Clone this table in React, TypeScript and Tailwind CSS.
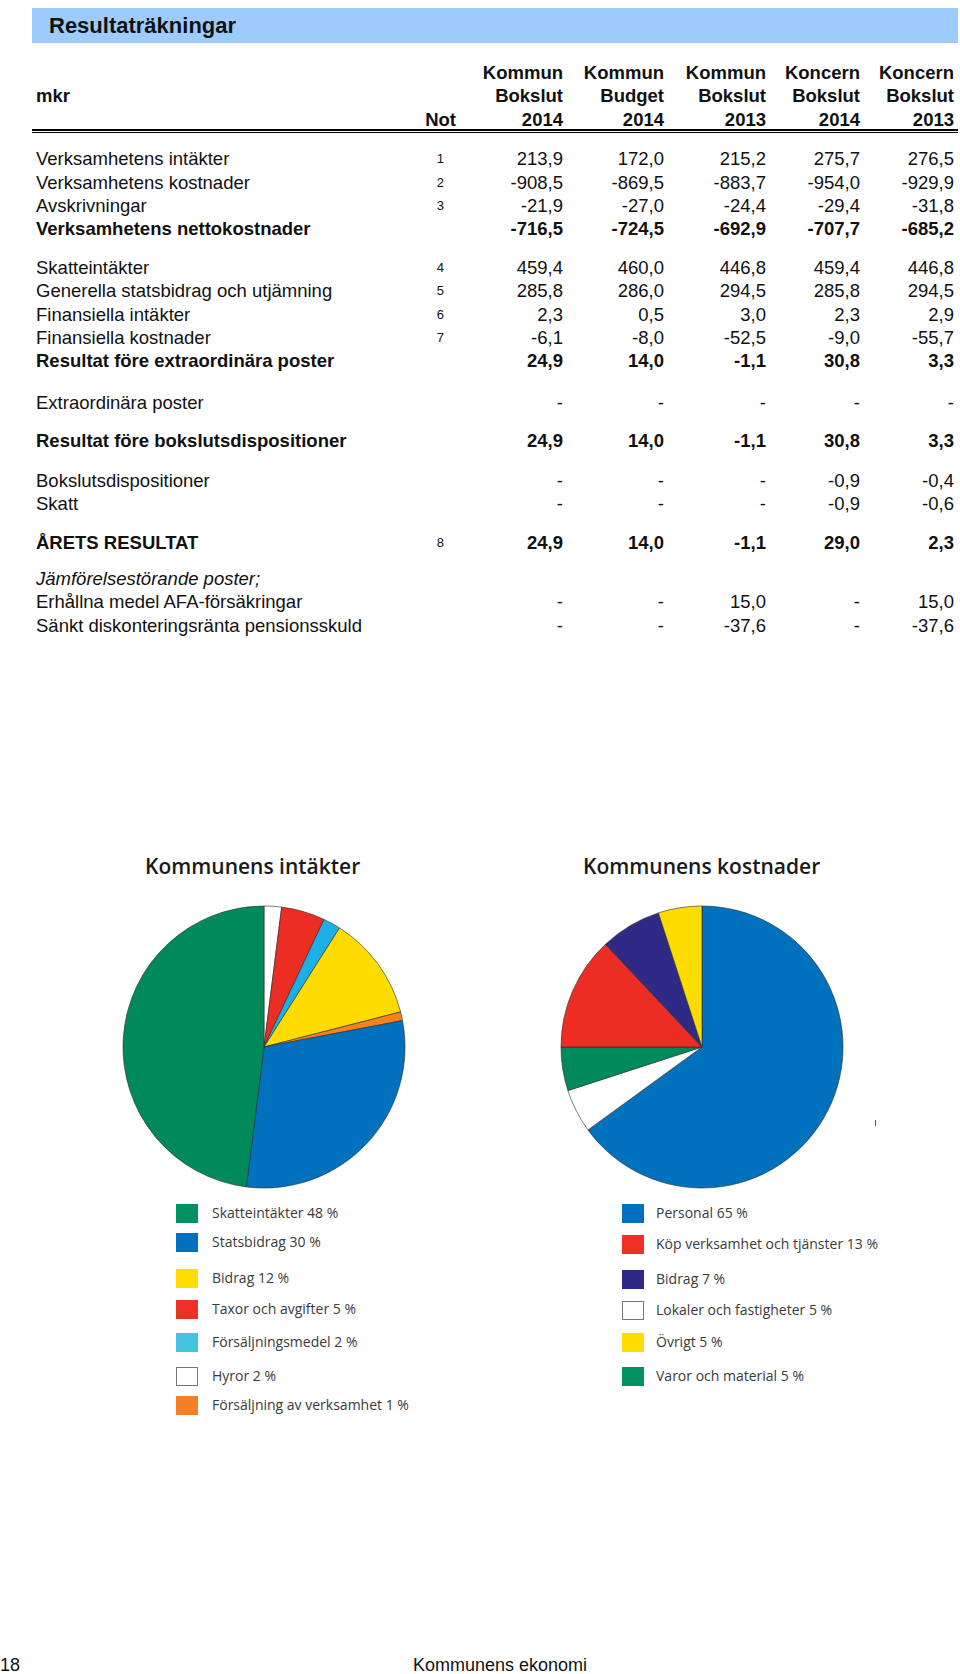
import React from "react"

type Row = {
  label: string
  not?: string
  vals: string[]
  bold?: boolean
  italic?: boolean
  gap?: string
}

const rows: Row[] = [
  { label: "Verksamhetens intäkter", not: "1", vals: ["213,9", "172,0", "215,2", "275,7", "276,5"] },
  { label: "Verksamhetens kostnader", not: "2", vals: ["-908,5", "-869,5", "-883,7", "-954,0", "-929,9"] },
  { label: "Avskrivningar", not: "3", vals: ["-21,9", "-27,0", "-24,4", "-29,4", "-31,8"] },
  { label: "Verksamhetens nettokostnader", vals: ["-716,5", "-724,5", "-692,9", "-707,7", "-685,2"], bold: true },
  { label: "Skatteintäkter", not: "4", vals: ["459,4", "460,0", "446,8", "459,4", "446,8"], gap: "mt-[15px]" },
  { label: "Generella statsbidrag och utjämning", not: "5", vals: ["285,8", "286,0", "294,5", "285,8", "294,5"] },
  { label: "Finansiella intäkter", not: "6", vals: ["2,3", "0,5", "3,0", "2,3", "2,9"] },
  { label: "Finansiella kostnader", not: "7", vals: ["-6,1", "-8,0", "-52,5", "-9,0", "-55,7"] },
  { label: "Resultat före extraordinära poster", vals: ["24,9", "14,0", "-1,1", "30,8", "3,3"], bold: true },
  { label: "Extraordinära poster", vals: ["-", "-", "-", "-", "-"], gap: "mt-[18px]" },
  { label: "Resultat före bokslutsdispositioner", vals: ["24,9", "14,0", "-1,1", "30,8", "3,3"], bold: true, gap: "mt-[15px]" },
  { label: "Bokslutsdispositioner", vals: ["-", "-", "-", "-0,9", "-0,4"], gap: "mt-[16px]" },
  { label: "Skatt", vals: ["-", "-", "-", "-0,9", "-0,6"] },
  { label: "ÅRETS RESULTAT", not: "8", vals: ["24,9", "14,0", "-1,1", "29,0", "2,3"], bold: true, gap: "mt-[15px]" },
  { label: "Jämförelsestörande poster;", vals: ["", "", "", "", ""], italic: true, gap: "mt-[13px]" },
  { label: "Erhållna medel AFA-försäkringar", vals: ["-", "-", "15,0", "-", "15,0"] },
  { label: "Sänkt diskonteringsränta pensionsskuld", vals: ["-", "-", "-37,6", "-", "-37,6"] },
]

const heads = [
  ["Kommun", "Bokslut", "2014"],
  ["Kommun", "Budget", "2014"],
  ["Kommun", "Bokslut", "2013"],
  ["Koncern", "Bokslut", "2014"],
  ["Koncern", "Bokslut", "2013"],
]

const grid = "grid grid-cols-[384px_36px_107px_101px_102px_94px_94px] pl-[4px]"

type Slice = { pct: number; color: string }

const income: Slice[] = [
  { pct: 2, color: "#ffffff" },
  { pct: 5, color: "#ec2d24" },
  { pct: 2, color: "#1db0e6" },
  { pct: 12, color: "#ffdc00" },
  { pct: 1, color: "#f5821f" },
  { pct: 30, color: "#0071bd" },
  { pct: 48, color: "#00895a" },
]

const costs: Slice[] = [
  { pct: 65, color: "#0071bd" },
  { pct: 5, color: "#ffffff" },
  { pct: 5, color: "#00895a" },
  { pct: 13, color: "#ec2d24" },
  { pct: 7, color: "#2e2a86" },
  { pct: 5, color: "#ffdc00" },
]

function arc(cx: number, cy: number, r: number, a0: number, a1: number) {
  const rad = (a: number) => ((a - 90) * Math.PI) / 180
  const x0 = cx + r * Math.cos(rad(a0))
  const y0 = cy + r * Math.sin(rad(a0))
  const x1 = cx + r * Math.cos(rad(a1))
  const y1 = cy + r * Math.sin(rad(a1))
  const large = a1 - a0 > 180 ? 1 : 0
  return `M${cx},${cy} L${x0},${y0} A${r},${r} 0 ${large} 1 ${x1},${y1} Z`
}

function Pie({ slices }: { slices: Slice[] }) {
  let a = 0
  return (
    <svg width="284" height="284" viewBox="0 0 284 284">
      {slices.map((s, i) => {
        const a0 = a
        a += s.pct * 3.6
        return (
          <path
            key={i}
            d={arc(142, 142, 141, a0, a)}
            fill={s.color}
            stroke="#2a2a2a"
            strokeWidth="0.6"
            strokeLinejoin="round"
          />
        )
      })}
    </svg>
  )
}

type Legend = { label: string; color: string; gap: string }

const incomeLegend: Legend[] = [
  { label: "Skatteintäkter 48 %", color: "bg-[#00925f]", gap: "mt-0" },
  { label: "Statsbidrag 30 %", color: "bg-[#0070c0]", gap: "mt-[9px]" },
  { label: "Bidrag 12 %", color: "bg-[#ffdd00]", gap: "mt-[16px]" },
  { label: "Taxor och avgifter 5 %", color: "bg-[#ee3124]", gap: "mt-[11px]" },
  { label: "Försäljningsmedel 2 %", color: "bg-[#45c3df]", gap: "mt-[13px]" },
  { label: "Hyror 2 %", color: "bg-white border border-[#777]", gap: "mt-[14px]" },
  { label: "Försäljning av verksamhet 1 %", color: "bg-[#f58025]", gap: "mt-[9px]" },
]

const costLegend: Legend[] = [
  { label: "Personal 65 %", color: "bg-[#0070c0]", gap: "mt-0" },
  { label: "Köp verksamhet och tjänster 13 %", color: "bg-[#ee3124]", gap: "mt-[11px]" },
  { label: "Bidrag 7 %", color: "bg-[#2e2a85]", gap: "mt-[15px]" },
  { label: "Lokaler och fastigheter 5 %", color: "bg-white border border-[#777]", gap: "mt-[11px]" },
  { label: "Övrigt 5 %", color: "bg-[#ffdd00]", gap: "mt-[12px]" },
  { label: "Varor och material 5 %", color: "bg-[#00925f]", gap: "mt-[14px]" },
]

function LegendList({ items, gapX }: { items: Legend[]; gapX: string }) {
  return (
    <div className="flex flex-col">
      {items.map((it) => (
        <div key={it.label} className={`flex items-center h-[20px] ${it.gap} ${gapX}`}>
          <span className={`w-[22px] h-[19px] shrink-0 ${it.color}`} />
          <span className="text-[14px] leading-[20px] text-[#3a3a3a] whitespace-nowrap">{it.label}</span>
        </div>
      ))}
    </div>
  )
}

export default function App() {
  return (
    <div className="h-[1674px] w-[960px] bg-white flex flex-col font-['Liberation_Sans',Arial,sans-serif] text-[#111]">
      {/* Title bar */}
      <div className="mt-[8px] ml-[32px] w-[926px] h-[35px] bg-[#9dcbfb] flex items-center pl-[17px]">
        <h1 className="text-[22px] font-bold leading-none text-[#111]">Resultaträkningar</h1>
      </div>

      {/* Table */}
      <div className="ml-[32px] w-[926px] mt-[18px] text-[18.5px] leading-[23.4px]">
        <div className={`${grid} font-bold`}>
          <div className="flex flex-col">
            <span>&nbsp;</span>
            <span>mkr</span>
          </div>
          <div className="flex flex-col text-right">
            <span>&nbsp;</span>
            <span>&nbsp;</span>
            <span>Not</span>
          </div>
          {heads.map((h, i) => (
            <div key={i} className="flex flex-col text-right">
              {h.map((t) => (
                <span key={t}>{t}</span>
              ))}
            </div>
          ))}
        </div>
        <div className="border-t-2 border-black -mt-[2px]" />
        <div className="border-t border-black mt-[1px]" />

        <div className="mt-[14px]">
          {rows.map((r) => (
            <div
              key={r.label}
              className={`${grid} ${r.gap ?? ""} ${r.bold ? "font-bold" : ""}`}
            >
              <span className={`whitespace-nowrap ${r.italic ? "italic" : ""}`}>{r.label}</span>
              <span className="text-[13px] text-right pr-[12px] font-normal">{r.not ?? ""}</span>
              {r.vals.map((v, i) => (
                <span key={i} className="text-right">
                  {v}
                </span>
              ))}
            </div>
          ))}
        </div>
      </div>

      {/* Charts */}
      <div className="relative mt-[215px] flex font-['Open_Sans',sans-serif]">
        <div className="ml-[122px] w-[282px] flex flex-col">
          <h2 className="ml-[23px] text-[21px] font-semibold leading-[28px] text-[#1a1a1a] whitespace-nowrap">
            Kommunens intäkter
          </h2>
          <div className="mt-[25px]">
            <Pie slices={income} />
          </div>
          <div className="mt-[14px] ml-[54px]">
            <LegendList items={incomeLegend} gapX="gap-[14px]" />
          </div>
        </div>
        <div className="ml-[156px] w-[282px] flex flex-col">
          <h2 className="ml-[23px] text-[21px] font-semibold leading-[28px] text-[#1a1a1a] whitespace-nowrap">
            Kommunens kostnader
          </h2>
          <div className="mt-[25px]">
            <Pie slices={costs} />
          </div>
          <div className="mt-[14px] ml-[62px]">
            <LegendList items={costLegend} gapX="gap-[12px]" />
          </div>
        </div>
        <span className="absolute left-[875px] top-[268px] w-[1px] h-[6px] bg-[#555]" />
      </div>

      {/* Footer */}
      <div className="mt-auto flex text-[18px] leading-[18px]">
        <span className="w-[413px]">18</span>
        <span>Kommunens ekonomi</span>
      </div>
    </div>
  )
}
